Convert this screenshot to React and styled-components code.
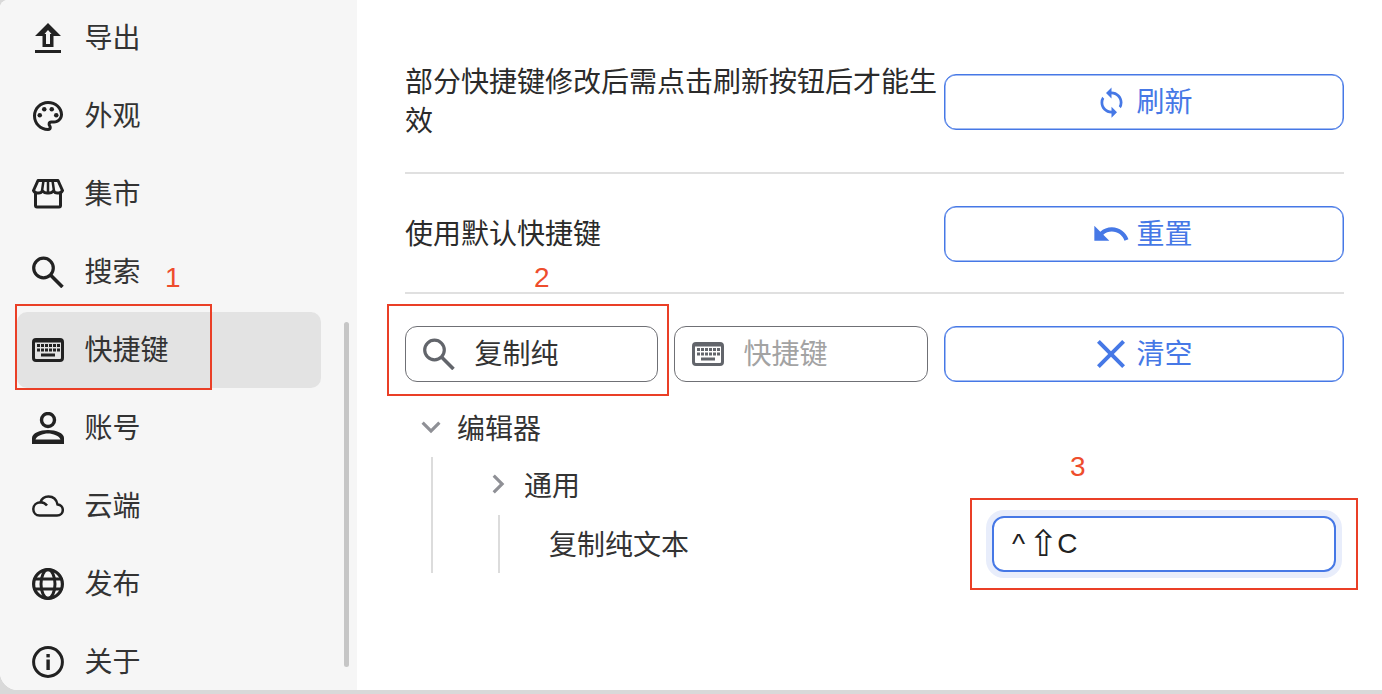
import styled, { createGlobalStyle } from 'styled-components';
import {
  MdOutlinePalette,
  MdSync,
  MdUndo,
  MdClose,
  MdKeyboardArrowDown,
  MdKeyboardArrowRight,
} from 'react-icons/md';

const BLUE = '#4678e6';

const GlobalStyle = createGlobalStyle`
  html, body {
    margin: 0;
    padding: 0;
    background: #d6d6d6;
  }
  body {
    font-family: "Noto Sans CJK SC", "Liberation Sans", sans-serif;
    color: #2b2b2b;
  }
`;

const Page = styled.div`
  position: relative;
  width: 1382px;
  height: 694px;
  overflow: hidden;
  background: #d9d9d9;
`;
const Window = styled.div`
  display: flex;
  width: 1382px;
  height: 690px;
  overflow: hidden;
  border-radius: 8px 0 0 18px;
  background: #fff;
`;
const Sidebar = styled.nav`
  position: relative;
  flex: 0 0 357px;
  padding-left: 17px;
  box-sizing: border-box;
  overflow: hidden;
  background: #f6f6f6;
`;
const NavItem = styled.div`
  display: flex;
  align-items: center;
  gap: 20.5px;
  box-sizing: border-box;
  width: 304px;
  height: 76px;
  margin-bottom: 2px;
  padding-left: 15px;
  border-radius: 10px;
  font-size: 28px;
  line-height: 39px;
  color: #333;
  background: ${(p) => (p.$active ? '#e3e3e3' : 'transparent')};
  svg {
    flex: none;
    color: #222;
  }
`;
const NavText = styled.span`
  padding-bottom: 3px;
`;
const ScrollThumb = styled.div`
  position: absolute;
  left: 344px;
  top: 322px;
  width: 5px;
  height: 345px;
  border-radius: 3px;
  background: #c6c6c6;
`;
const Main = styled.main`
  flex: 1;
  min-width: 0;
  padding: 63px 38px 0 48px;
`;
const Row = styled.div`
  display: flex;
  align-items: center;
  padding: ${(p) => p.$padding};
  border-bottom: 2px solid #e0e0e0;
`;
const Label = styled.div`
  flex: 1;
  margin-top: -2px;
  padding-bottom: 2px;
  font-size: 28px;
  line-height: 39px;
  color: #2b2b2b;
`;
const Button = styled.button`
  flex: 0 0 400px;
  display: flex;
  align-items: center;
  justify-content: center;
  gap: 9px;
  height: 56px;
  padding: 0 0 4px;
  border: 1px solid ${BLUE};
  border-radius: 12px;
  box-shadow: inset 0 0 0 0.5px ${BLUE};
  background: #fff;
  color: ${BLUE};
  font-family: inherit;
  font-size: 28px;
`;
const ButtonIcon = styled.span`
  display: flex;
  align-items: center;
  justify-content: center;
  width: 32px;
  height: 32px;
  margin-top: 4px;
  svg {
    flex: none;
  }
`;
const Filters = styled.div`
  display: flex;
  gap: 16px;
  padding-top: 32px;
`;
const FilterBox = styled.label`
  flex: 0 0 ${(p) => p.$width}px;
  display: flex;
  align-items: center;
  gap: 20px;
  box-sizing: border-box;
  height: 56px;
  padding-left: 16.5px;
  border: 1.5px solid #6f7075;
  border-radius: 12px;
  svg {
    flex: none;
    color: #62656b;
  }
`;
const FilterInput = styled.input`
  width: 150px;
  padding: 0 0 4px;
  border: 0;
  outline: 0;
  background: transparent;
  font-family: inherit;
  font-size: 28px;
  color: #333;
  &::placeholder {
    color: #a3a3a3;
  }
`;
const Tree = styled.div`
  padding-top: 17px;
`;
const TreeRow = styled.div`
  display: flex;
  align-items: center;
  height: 58px;
  padding-bottom: ${(p) => p.$lift || 3}px;
  box-sizing: border-box;
  font-size: 28px;
  color: #333;
  svg {
    flex: none;
    color: #8f9096;
  }
`;
const TreeChildren = styled.div`
  margin-left: 26px;
  padding-left: ${(p) => p.$indent}px;
  border-left: 2px solid #dcdcdc;
`;
const TreeToggle = styled.span`
  display: flex;
  justify-content: center;
  width: 52px;
`;
const LeafRow = styled(TreeRow)`
  justify-content: space-between;
  padding-left: 49px;
  padding-right: 8px;
  padding-bottom: 0;
`;
const LeafText = styled.span`
  padding-bottom: 3px;
`;
const ShortcutField = styled.div`
  display: flex;
  align-items: center;
  box-sizing: border-box;
  width: 344px;
  height: 56px;
  padding: 0 18px;
  border: 2px solid ${BLUE};
  border-radius: 12px;
  box-shadow: 0 0 0 6px #e8edfb;
  font-family: "Liberation Sans", sans-serif;
  font-size: 28px;
  color: #222;
`;
const ShiftGlyph = styled.span`
  margin: 0 -1px 0 3px;
  font-family: "DejaVu Sans", sans-serif;
  font-size: 36px;
  line-height: 40px;
`;
const Callout = styled.div`
  position: absolute;
  left: ${(p) => p.$x}px;
  top: ${(p) => p.$y}px;
  width: ${(p) => p.$w}px;
  height: ${(p) => p.$h}px;
  box-sizing: border-box;
  border: 2px solid #ea3f26;
`;
const CalloutNumber = styled.div`
  position: absolute;
  left: ${(p) => p.$x}px;
  top: ${(p) => p.$y}px;
  font-family: "Liberation Sans", sans-serif;
  font-size: 28px;
  line-height: 32px;
  color: #ee4d2d;
`;

const Svg = ({ children }) => (
  <svg width={32} height={32} viewBox='0 0 32 32' fill='none'>
    {children}
  </svg>
);

const UploadIcon = () => (
  <Svg>
    <path
      fillRule='evenodd'
      fill='currentColor'
      d='M16 1 L29 14 H21.5 V25 H10.5 V14 H3 Z M16 8 L12.5 12 H14 V22 H18 V12 H19.5 Z'
    />
    <rect x='3' y='28' width='26' height='3' fill='currentColor' />
  </Svg>
);

const PaletteIcon = () => <MdOutlinePalette size={36} style={{ margin: -2 }} />;

const StoreIcon = () => (
  <Svg>
    <g stroke='currentColor' strokeWidth='3' strokeLinejoin='round'>
      <path d='M6 2.5 H26 L30.5 12.5 Q29 15.5 26 15 Q23.5 15.5 21.5 13 Q19 15.5 16 15 Q13 15.5 10.5 13 Q8.5 15.5 6 15 Q3 15.5 1.5 12.5 Z' />
      <path d='M3.5 15 V27.5 Q3.5 29 5 29 H27 Q28.5 29 28.5 27.5 V15' />
      <path d='M11.5 2.5 L10 13 M16 2.5 V14 M20.5 2.5 L22 13' strokeWidth='2.5' />
    </g>
  </Svg>
);

const SearchIcon = () => (
  <Svg>
    <circle cx='11.5' cy='12' r='9.8' stroke='currentColor' strokeWidth='3.2' />
    <path d='M18.5 19 L30.5 31' stroke='currentColor' strokeWidth='3.6' />
  </Svg>
);

const KeyboardIcon = () => (
  <Svg>
    <rect x='1.5' y='5.5' width='29' height='21' rx='2.5' stroke='currentColor' strokeWidth='3' />
    <rect x='1.5' y='5.5' width='29' height='3' fill='currentColor' />
    <g fill='currentColor'>
      {[5, 9, 13, 17, 21, 25].map((x) => (
        <g key={x}>
          <rect x={x} y='10' width='3' height='3' />
          <rect x={x} y='14.5' width='3' height='3' />
        </g>
      ))}
      <rect x='9' y='19.5' width='14' height='3' />
    </g>
  </Svg>
);

const PersonIcon = () => (
  <Svg>
    <circle cx='16' cy='8' r='6.5' stroke='currentColor' strokeWidth='3.4' />
    <path
      fillRule='evenodd'
      fill='currentColor'
      d='M0 32 V26 C0 21 8 18 16 18 C24 18 32 21 32 26 V32 Z M3.5 27.5 H28.5 C27.5 24 21 21.5 16 21.5 C11 21.5 4.5 24 3.5 27.5 Z'
    />
  </Svg>
);

const CloudIcon = () => (
  <Svg>
    <path
      stroke='currentColor'
      strokeWidth='2.5'
      d='M7.5 25.5 H25 C28.5 25.5 30.8 23 30.8 20 C30.8 16.8 28.5 14.6 25.5 14.4 C24.5 9.5 21 6.5 16.5 6.5 C12.5 6.5 9.5 9 8.5 12.2 C4.2 12.4 1.3 15.3 1.3 19 C1.3 22.8 4 25.5 7.5 25.5 Z M8.5 12.2 C11.5 12.2 13.5 13.5 15 15.5'
    />
  </Svg>
);

const GlobeIcon = () => (
  <Svg>
    <g stroke='currentColor'>
      <circle cx='16' cy='16' r='14.4' strokeWidth='3.2' />
      <ellipse cx='16' cy='16' rx='7' ry='14.4' strokeWidth='3' />
      <path d='M2 11 H30 M2 21 H30' strokeWidth='3' />
    </g>
  </Svg>
);

const InfoIcon = () => (
  <Svg>
    <circle cx='16' cy='16' r='14.4' stroke='currentColor' strokeWidth='3' />
    <rect x='14.4' y='8' width='3.4' height='3.4' fill='currentColor' />
    <rect x='14.4' y='13.5' width='3.4' height='10.5' fill='currentColor' />
  </Svg>
);

const navItems = [
  ['导出', UploadIcon],
  ['外观', PaletteIcon],
  ['集市', StoreIcon],
  ['搜索', SearchIcon],
  ['快捷键', KeyboardIcon],
  ['账号', PersonIcon],
  ['云端', CloudIcon],
  ['发布', GlobeIcon],
  ['关于', InfoIcon],
];

const App = () => {
  return (
    <Page>
      <GlobalStyle />
      <Window>
        <Sidebar>
          {navItems.map(([name, Icon]) => (
            <NavItem key={name} $active={name === '快捷键'}>
              <Icon />
              <NavText>{name}</NavText>
            </NavItem>
          ))}
          <ScrollThumb />
        </Sidebar>
        <Main>
          <Row $padding='0 0 31px'>
            <Label>部分快捷键修改后需点击刷新按钮后才能生效</Label>
            <Button>
              <ButtonIcon>
                <MdSync size={33} />
              </ButtonIcon>
              刷新
            </Button>
          </Row>
          <Row $padding='32px 0 30px'>
            <Label>使用默认快捷键</Label>
            <Button>
              <ButtonIcon>
                <MdUndo size={40} />
              </ButtonIcon>
              重置
            </Button>
          </Row>
          <Filters>
            <FilterBox $width={253}>
              <SearchIcon />
              <FilterInput defaultValue='复制纯' />
            </FilterBox>
            <FilterBox $width={254}>
              <KeyboardIcon />
              <FilterInput placeholder='快捷键' />
            </FilterBox>
            <Button>
              <ButtonIcon>
                <MdClose size={48} />
              </ButtonIcon>
              清空
            </Button>
          </Filters>
          <Tree>
            <TreeRow>
              <TreeToggle>
                <MdKeyboardArrowDown size={38} />
              </TreeToggle>
              编辑器
            </TreeRow>
            <TreeChildren $indent={39}>
              <TreeRow $lift={5}>
                <TreeToggle>
                  <MdKeyboardArrowRight size={38} />
                </TreeToggle>
                通用
              </TreeRow>
              <TreeChildren $indent={0}>
                <LeafRow>
                  <LeafText>复制纯文本</LeafText>
                  <ShortcutField>
                    ^<ShiftGlyph>⇧</ShiftGlyph>C
                  </ShortcutField>
                </LeafRow>
              </TreeChildren>
            </TreeChildren>
          </Tree>
        </Main>
      </Window>
      <Callout $x={15} $y={304} $w={197} $h={86} />
      <Callout $x={387} $y={304} $w={282} $h={92} />
      <Callout $x={970} $y={498} $w={388} $h={92} />
      <CalloutNumber $x={165} $y={262}>1</CalloutNumber>
      <CalloutNumber $x={534} $y={262}>2</CalloutNumber>
      <CalloutNumber $x={1070} $y={451}>3</CalloutNumber>
    </Page>
  );
};

export default App;
